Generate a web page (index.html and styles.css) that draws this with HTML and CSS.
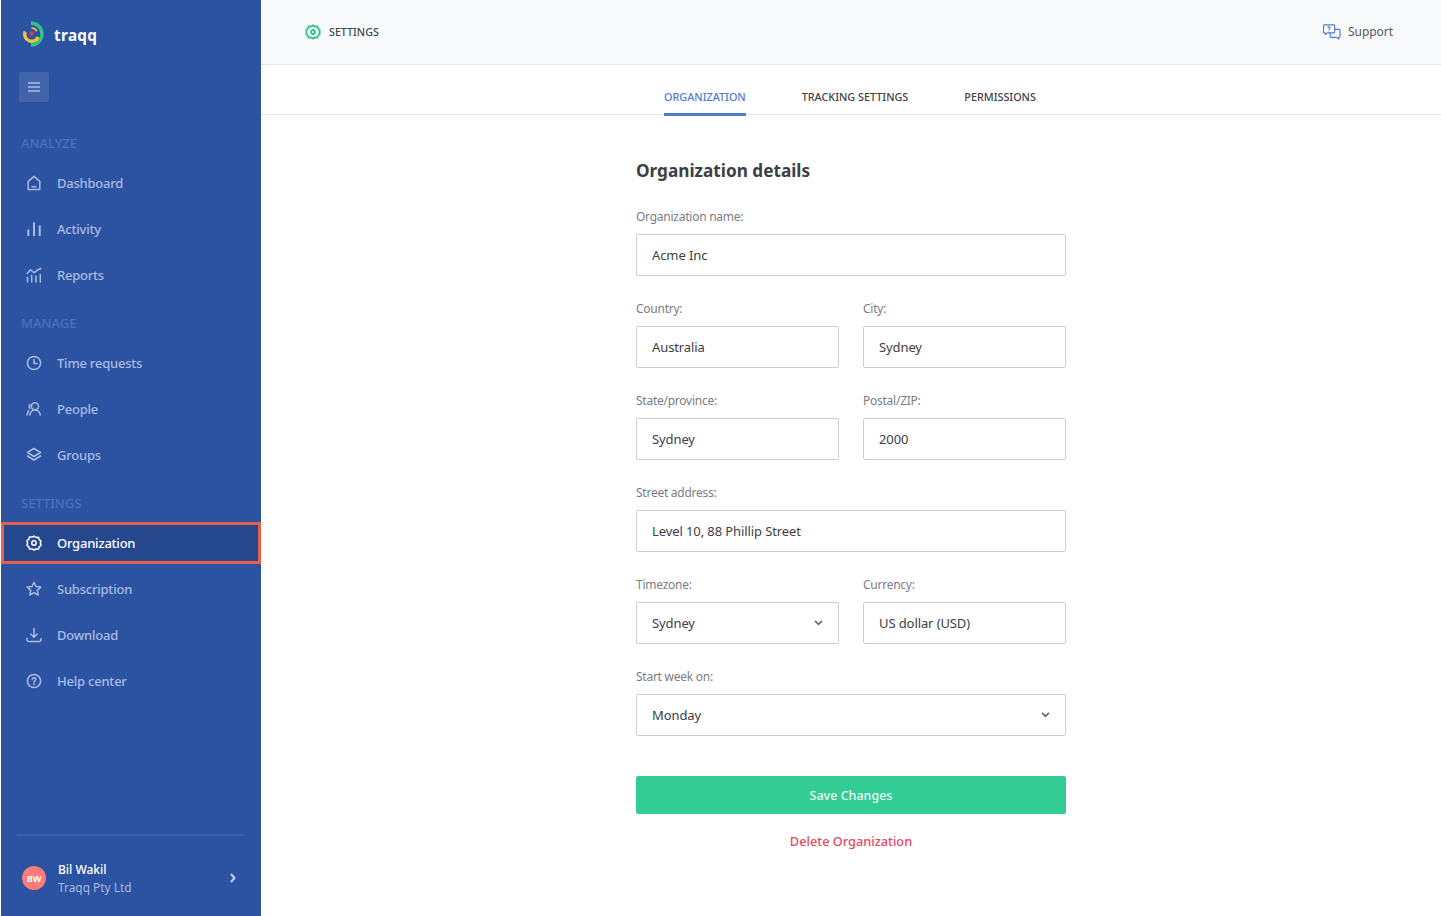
FILE: index.html
```html
<!DOCTYPE html>
<html lang="en">
<head>
<meta charset="utf-8">
<title>Traqq – Settings</title>
<link rel="stylesheet" href="styles.css">
</head>
<body>
<div class="app">
  <aside class="sidebar">
    <div class="brand">
      <svg class="logo" viewBox="0 0 24 28" width="24" height="28" fill="none">
        <path d="M9 3a11 11 0 0 1 0 22" stroke="#2fc48f" stroke-width="3.400"/>
        <path d="M3.200 11.500a7 7 0 0 0 13 5.500" stroke="#f2c230" stroke-width="3.400"/>
        <path d="M9.500 8a6 6 0 0 1 5.400 3.500" stroke="#f2b030" stroke-width="1.800"/>
        <circle cx="9.500" cy="13.500" r="2.300" fill="#c8406e"/>
      </svg>
      <span class="brand-name">traqq</span>
    </div>
    <div class="menu-btn">
      <svg viewBox="0 0 12 10" width="12" height="10" fill="none" stroke="currentColor" stroke-width="1.400"><path d="M0 1h12M0 5h12M0 9h12"/></svg>
    </div>

    <div class="nav-label first">ANALYZE</div>
    <a class="nav-item">
      <svg class="ico" viewBox="0 0 16 16"><path d="M2.200 6.400 8 1.400l5.800 5V14.600H2.200zM6 11.700h4"/></svg>
      <span>Dashboard</span>
    </a>
    <a class="nav-item">
      <svg class="ico ico-bars" viewBox="0 0 16 16"><path d="M2.300 8.500V15M8 1.500V15M13.700 4.500V15"/></svg>
      <span>Activity</span>
    </a>
    <a class="nav-item">
      <svg class="ico" viewBox="0 0 16 16"><path d="M1.200 6.500 4.500 2.800 8 5.800l3-2.500 3.800-1.800M1.500 10.500V15M5.700 8.500V15M10 9V15M14.300 7.500V15"/></svg>
      <span>Reports</span>
    </a>

    <div class="nav-label">MANAGE</div>
    <a class="nav-item">
      <svg class="ico" viewBox="0 0 16 16"><circle cx="8" cy="8" r="6.600"/><path d="M8 4.500V8.500h3"/></svg>
      <span>Time requests</span>
    </a>
    <a class="nav-item">
      <svg class="ico" viewBox="0 0 16 16"><circle cx="9" cy="5.300" r="3.500"/><path d="M3.700 14c.6-3 2.600-5 5.300-5s4.700 2 5.300 5M4 3.500C3 5 3 6.500 4 7.500M2.500 9.500 1 14"/></svg>
      <span>People</span>
    </a>
    <a class="nav-item">
      <svg class="ico" viewBox="0 0 16 16"><path d="M8 1.500 14.500 5.500 8 9.500 1.500 5.500zM1.500 9 8 13l6.500-4"/></svg>
      <span>Groups</span>
    </a>

    <div class="nav-label">SETTINGS</div>
    <a class="nav-item active">
      <svg class="ico" viewBox="0 0 16 16"><path d="M8 1.200 10 2.400l2.500-.1.700 2.300 1.800 1.500L14.400 8 15 10.300l-1.800 1.500-.7 2.300-2.500-.1L8 15l-2-1-2.500.1-.7-2.300L1 10.300 1.600 8 1 5.700l1.800-1.500.7-2.300 2.500.1z"/><circle cx="8" cy="8" r="2.200"/></svg>
      <span>Organization</span>
    </a>
    <a class="nav-item">
      <svg class="ico" viewBox="0 0 16 16"><path d="M8 1.200l2 4.300 4.700.6-3.400 3.200.9 4.700L8 11.700 3.800 14l.9-4.700L1.300 6.100 6 5.500z"/></svg>
      <span>Subscription</span>
    </a>
    <a class="nav-item">
      <svg class="ico" viewBox="0 0 16 16"><path d="M8 1.500V10M4.800 7 8 10.200 11.200 7M1 11.500v1.300c0 1 .6 1.700 1.600 1.700h10.800c1 0 1.600-.7 1.600-1.700v-1.300"/></svg>
      <span>Download</span>
    </a>
    <a class="nav-item">
      <svg class="ico" viewBox="0 0 16 16"><circle cx="8" cy="8" r="6.600"/><path d="M6.200 6.300C6.300 5.200 7 4.700 8 4.700s1.800.6 1.800 1.600c0 1.400-1.800 1.400-1.800 2.800M8 10.600v1"/></svg>
      <span>Help center</span>
    </a>

    <div class="user">
      <div class="avatar">BW</div>
      <div class="user-text">
        <div class="user-name">Bil Wakil</div>
        <div class="user-org">Traqq Pty Ltd</div>
      </div>
      <svg class="user-arrow" viewBox="0 0 8 10" width="8" height="10" fill="none" stroke="currentColor" stroke-width="2"><path d="M2 1l3.500 4L2 9"/></svg>
    </div>
  </aside>

  <main class="main">
    <header class="topbar">
      <div class="crumb">
        <svg viewBox="0 0 16 16" width="16" height="16" fill="none" stroke="#2fc48f" stroke-width="1.800"><path d="M8 1.400 10 2.500l2.400-.1.700 2.200 1.700 1.500L14.300 8l.5 1.900-1.700 1.500-.7 2.200-2.400-.1-2 1.100-2-1.100-2.400.1-.7-2.200-1.700-1.500L1.700 8l-.5-1.900 1.700-1.500.7-2.200 2.400.1z"/><circle cx="8" cy="8" r="2"/></svg>
        <span>SETTINGS</span>
      </div>
      <div class="support">
        <svg viewBox="0 0 20 18" width="18" height="16" fill="none" stroke="#4f7bd0" stroke-width="1.300" stroke-linejoin="round"><path d="M1.500 1h10.500a1 1 0 0 1 1 1v7a1 1 0 0 1-1 1H5l-2.500 2v-2h-1a1 1 0 0 1-1-1V2a1 1 0 0 1 1-1z"/><path d="M13 6h5a1 1 0 0 1 1 1v7a1 1 0 0 1-1 1h-.500v2L15 15H9a1 1 0 0 1-1-1v-4"/><path d="M5.200 4c.2-1 2.500-1 2.500.3 0 1-1.300 1-1.300 2M6.400 7.300v.8"/></svg>
        <span>Support</span>
      </div>
    </header>

    <nav class="tabs">
      <a class="tab active">ORGANIZATION</a>
      <a class="tab">TRACKING SETTINGS</a>
      <a class="tab">PERMISSIONS</a>
    </nav>

    <form class="form">
      <h1 class="title">Organization details</h1>
      <div class="row">
        <div class="group"><div class="label">Organization name:</div><div class="field">Acme Inc</div></div>
      </div>
      <div class="row">
        <div class="group"><div class="label">Country:</div><div class="field">Australia</div></div>
        <div class="group"><div class="label">City:</div><div class="field">Sydney</div></div>
      </div>
      <div class="row">
        <div class="group"><div class="label">State/province:</div><div class="field">Sydney</div></div>
        <div class="group"><div class="label">Postal/ZIP:</div><div class="field">2000</div></div>
      </div>
      <div class="row">
        <div class="group"><div class="label">Street address:</div><div class="field">Level 10, 88 Phillip Street</div></div>
      </div>
      <div class="row">
        <div class="group"><div class="label">Timezone:</div><div class="field select">Sydney<svg class="caret" viewBox="0 0 10 7" width="9" height="6" fill="none" stroke="currentColor" stroke-width="2"><path d="M1 1l4 4 4-4"/></svg></div></div>
        <div class="group"><div class="label">Currency:</div><div class="field">US dollar (USD)</div></div>
      </div>
      <div class="row">
        <div class="group"><div class="label">Start week on:</div><div class="field select">Monday<svg class="caret" viewBox="0 0 10 7" width="9" height="6" fill="none" stroke="currentColor" stroke-width="2"><path d="M1 1l4 4 4-4"/></svg></div></div>
      </div>
      <div class="save">Save Changes</div>
      <div class="delete">Delete Organization</div>
    </form>
  </main>
</div>
</body>
</html>
```
FILE: styles.css
```css
* { box-sizing: border-box; }
html, body { margin: 0; padding: 0; height: 100%; }
body {
  background: #fff;
  font-family: "Noto Sans", "Open Sans", sans-serif;
  font-size: 13px;
  overflow: hidden;
}
.app { display: flex; height: 916px; padding-left: 1px; }

.sidebar {
  width: 260px;
  flex: none;
  background: #2c53a1;
  display: flex;
  flex-direction: column;
  color: #a8bce4;
}
.brand { display: flex; align-items: center; height: 72px; padding: 0 0 4px 21px; gap: 8px; }
.logo { flex: none; }
.brand-name { color: #fff; font-weight: 700; font-size: 15.200px; letter-spacing: .4px; margin-top: 1px; }
.menu-btn {
  width: 30px; height: 30px; margin-left: 18px;
  background: rgba(255,255,255,.1);
  border-radius: 2px;
  display: flex; align-items: center; justify-content: center;
  color: #a8bce4;
}
.nav-label {
  height: 18px; line-height: 18px;
  margin: 16px 0 8px 20px;
  color: #4a70ba;
  font-size: 13px;
  font-weight: 500;
}
.nav-label.first { margin-top: 32px; }
.nav-item {
  display: flex; align-items: center;
  height: 46px;
  padding-left: 25px;
  gap: 15px;
  font-size: 13px;
  letter-spacing: -.22px;
  font-weight: 500;
}
.ico {
  width: 16px; height: 16px; flex: none;
  fill: none; stroke: currentColor; stroke-width: 1.500;
  stroke-linejoin: round; stroke-linecap: round;
}
.ico-bars { stroke-width: 2; stroke-linecap: butt; }
.nav-item.active {
  height: 42px;
  margin: 2px 0;
  padding-left: 22px;
  background: #25478e;
  border: 3px solid #e8604c;
  color: #fff;
}
.user {
  margin: auto 16px 0 16px;
  height: 82px;
  border-top: 2px solid rgba(255,255,255,.07);
  display: flex; align-items: center;
  padding: 4px 0 0 5px;
}
.avatar {
  width: 24px; height: 24px; border-radius: 50%;
  background: #fd7b7b; color: #fff;
  font-size: 9px; font-weight: 700;
  display: flex; align-items: center; justify-content: center;
  flex: none;
}
.user-text { margin-left: 12px; flex: 1; font-size: 12px; line-height: 18px; }
.user-name { color: #fff; font-weight: 500; }
.user-org { color: #a8bce4; font-size: 11.900px; line-height: 17px; }
.user-arrow { margin-right: 8px; color: #c6d3ee; }

.main { flex: 1; min-width: 0; }
.topbar {
  height: 65px;
  background: #f8fafc;
  border-bottom: 1px solid #e3e5e8;
  display: flex; align-items: center; justify-content: space-between;
  padding: 0 48px 1px 44px;
}
.crumb { display: flex; align-items: center; gap: 8px; color: #44474c; font-size: 10.700px; font-weight: 500; }
.support { display: flex; align-items: center; gap: 7px; color: #55585e; font-size: 12px; letter-spacing: -.05px; }

.tabs {
  height: 50px;
  padding-right: 2px;
  border-bottom: 1px solid #e3e5e8;
  display: flex; justify-content: center;
  gap: 56px;
}
.tab {
  height: 51px;
  padding-top: 23px;
  line-height: 18px;
  font-size: 10.800px;
  font-weight: 500;
  color: #3f4247;
}
.tab.active { color: #4f7bd0; border-bottom: 3px solid #4f7bd0; }

.form { width: 430px; margin: 0 auto; }
.title { margin: 42px 0 0; height: 28px; line-height: 28px; font-size: 17.200px; font-weight: 700; color: #3c3f44; }
.row { display: flex; gap: 24px; margin-top: 24px; }
.title + .row { margin-top: 23px; }
.group { flex: 1; min-width: 0; }
.label { height: 18px; line-height: 18px; margin-bottom: 8px; font-size: 12px; letter-spacing: -.25px; color: #7a7d83; }
.field {
  height: 42px;
  border: 1px solid #cdcfd3;
  border-radius: 2px;
  padding: 0 15px;
  display: flex; align-items: center; justify-content: space-between;
  font-size: 13px;
  letter-spacing: -.1px;
  color: #3d4045;
}
.caret { color: #666a70; }
.save {
  margin-top: 40px;
  height: 38px;
  background: #33cc95;
  border-radius: 2px;
  color: #eafaf4;
  font-size: 12.500px; font-weight: 500;
  display: flex; align-items: center; justify-content: center;
}
.delete {
  margin-top: 18px;
  text-align: center;
  line-height: 18px;
  color: #e8485f;
  font-size: 12.750px; font-weight: 500;
}
```
